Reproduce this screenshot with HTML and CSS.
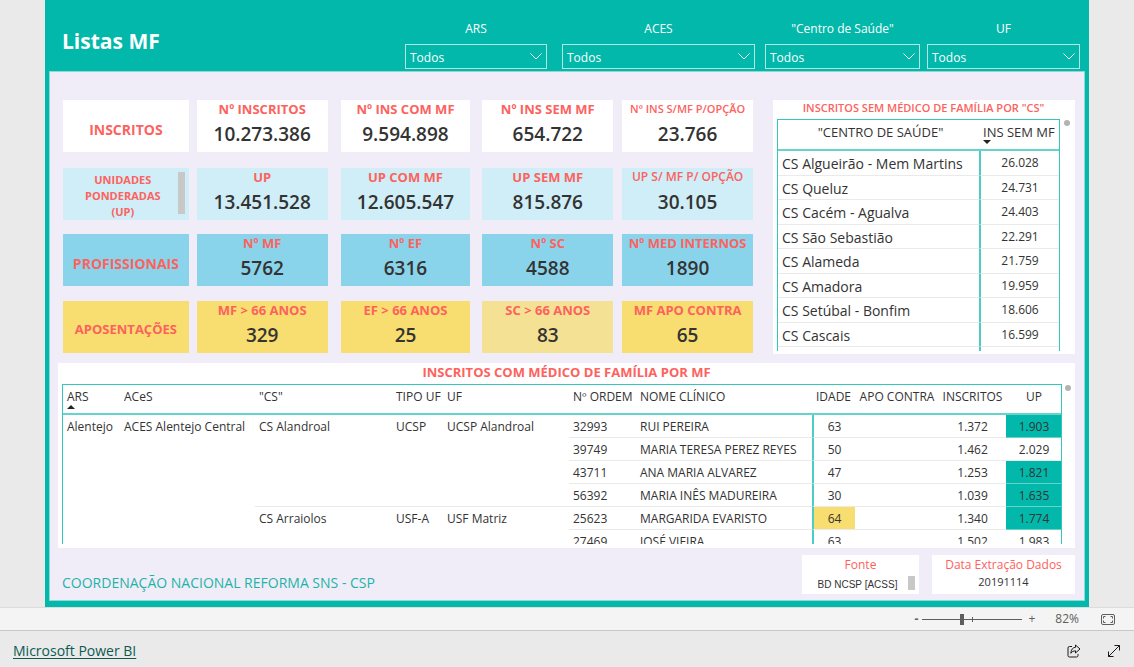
FILE: index.html
```html
<!DOCTYPE html>
<html lang="pt">
<head>
<meta charset="utf-8">
<title>Listas MF</title>
<link rel="stylesheet" href="styles.css">
</head>
<body>
<main class="report">
  <header class="report-header">
    <h1 class="report-title">Listas MF</h1>
    <form class="slicers">
      <div class="slicer">
        <label for="ars">ARS</label>
        <div class="select-box"><select id="ars"><option>Todos</option></select>
          <svg class="chevron" viewBox="0 0 12 7" aria-hidden="true"><path d="M0.5 0.5 6 6 11.5 0.5"/></svg></div>
      </div>
      <div class="slicer">
        <label for="aces">ACES</label>
        <div class="select-box"><select id="aces"><option>Todos</option></select>
          <svg class="chevron" viewBox="0 0 12 7" aria-hidden="true"><path d="M0.5 0.5 6 6 11.5 0.5"/></svg></div>
      </div>
      <div class="slicer">
        <label for="cs">"Centro de Saúde"</label>
        <div class="select-box"><select id="cs"><option>Todos</option></select>
          <svg class="chevron" viewBox="0 0 12 7" aria-hidden="true"><path d="M0.5 0.5 6 6 11.5 0.5"/></svg></div>
      </div>
      <div class="slicer">
        <label for="uf">UF</label>
        <div class="select-box"><select id="uf"><option>Todos</option></select>
          <svg class="chevron" viewBox="0 0 12 7" aria-hidden="true"><path d="M0.5 0.5 6 6 11.5 0.5"/></svg></div>
      </div>
    </form>
  </header>

  <div class="canvas">
    <div class="top-area">
      <section class="cards">
        <h2 class="card row-label">INSCRITOS</h2>
        <div class="card"><h3>Nº INSCRITOS</h3><p>10.273.386</p></div>
        <div class="card"><h3>Nº INS COM MF</h3><p>9.594.898</p></div>
        <div class="card"><h3>Nº INS SEM MF</h3><p>654.722</p></div>
        <div class="card small-title"><h3>Nº INS S/MF P/OPÇÃO</h3><p>23.766</p></div>

        <div class="card pale row-label long"><h2>UNIDADES PONDERADAS (UP)</h2><span class="thumb"></span></div>
        <div class="card pale"><h3>UP</h3><p>13.451.528</p></div>
        <div class="card pale"><h3>UP COM MF</h3><p>12.605.547</p></div>
        <div class="card pale"><h3>UP SEM MF</h3><p>815.876</p></div>
        <div class="card pale medium-title"><h3>UP S/ MF P/ OPÇÃO</h3><p>30.105</p></div>

        <h2 class="card blue row-label">PROFISSIONAIS</h2>
        <div class="card blue"><h3>Nº MF</h3><p>5762</p></div>
        <div class="card blue"><h3>Nº EF</h3><p>6316</p></div>
        <div class="card blue"><h3>Nº SC</h3><p>4588</p></div>
        <div class="card blue"><h3>Nº MED INTERNOS</h3><p>1890</p></div>

        <h2 class="card yellow row-label compact">APOSENTAÇÕES</h2>
        <div class="card yellow"><h3>MF &gt; 66 ANOS</h3><p>329</p></div>
        <div class="card yellow"><h3>EF &gt; 66 ANOS</h3><p>25</p></div>
        <div class="card yellow soft"><h3>SC &gt; 66 ANOS</h3><p>83</p></div>
        <div class="card yellow"><h3>MF APO CONTRA</h3><p>65</p></div>
      </section>

      <section class="panel centres">
        <h2>INSCRITOS SEM MÉDICO DE FAMÍLIA POR "CS"</h2>
        <div class="scroller">
          <div class="viewport">
            <table>
              <colgroup><col class="c-name"><col class="c-count"></colgroup>
              <thead><tr><th>"CENTRO DE SAÚDE"</th><th>INS SEM MF<svg class="sort" viewBox="0 0 8 4" aria-hidden="true"><path d="M0 0h8L4 4z"/></svg></th></tr></thead>
              <tbody>
                <tr><td>CS Algueirão - Mem Martins</td><td>26.028</td></tr>
                <tr><td>CS Queluz</td><td>24.731</td></tr>
                <tr><td>CS Cacém - Agualva</td><td>24.403</td></tr>
                <tr><td>CS São Sebastião</td><td>22.291</td></tr>
                <tr><td>CS Alameda</td><td>21.759</td></tr>
                <tr><td>CS Amadora</td><td>19.959</td></tr>
                <tr><td>CS Setúbal - Bonfim</td><td>18.606</td></tr>
                <tr><td>CS Cascais</td><td>16.599</td></tr>
                <tr><td></td><td></td></tr>
              </tbody>
            </table>
          </div>
          <span class="dot"></span>
        </div>
      </section>
    </div>

    <section class="panel doctors">
      <h2>INSCRITOS COM MÉDICO DE FAMÍLIA POR MF</h2>
      <div class="scroller">
        <div class="viewport">
          <table>
            <colgroup><col class="d-ars"><col class="d-aces"><col class="d-cs"><col class="d-type"><col class="d-uf"><col class="d-order"><col class="d-name"><col class="d-age"><col class="d-apo"><col class="d-ins"><col class="d-up"></colgroup>
            <thead><tr><th>ARS<svg class="sort" viewBox="0 0 8 4" aria-hidden="true"><path d="M0 4h8L4 0z"/></svg></th><th>ACeS</th><th>"CS"</th><th>TIPO UF</th><th>UF</th><th>Nº ORDEM</th><th>NOME CLÍNICO</th><th class="num">IDADE</th><th class="num">APO CONTRA</th><th class="num">INSCRITOS</th><th class="num">UP</th></tr></thead>
            <tbody>
              <tr><td rowspan="6">Alentejo</td><td rowspan="6">ACES Alentejo Central</td><td rowspan="4">CS Alandroal</td><td rowspan="4">UCSP</td><td rowspan="4">UCSP Alandroal</td><td>32993</td><td>RUI PEREIRA</td><td class="num age">63</td><td></td><td class="num">1.372</td><td class="num low">1.903</td></tr>
              <tr><td>39749</td><td>MARIA TERESA PEREZ REYES</td><td class="num age">50</td><td></td><td class="num">1.462</td><td class="num">2.029</td></tr>
              <tr><td>43711</td><td>ANA MARIA ALVAREZ</td><td class="num age">47</td><td></td><td class="num">1.253</td><td class="num low">1.821</td></tr>
              <tr><td>56392</td><td>MARIA INÊS MADUREIRA</td><td class="num age">30</td><td></td><td class="num">1.039</td><td class="num low">1.635</td></tr>
              <tr><td rowspan="2">CS Arraiolos</td><td rowspan="2">USF-A</td><td rowspan="2">USF Matriz</td><td>25623</td><td>MARGARIDA EVARISTO</td><td class="num age senior">64</td><td></td><td class="num">1.340</td><td class="num low">1.774</td></tr>
              <tr><td>27469</td><td>JOSÉ VIEIRA</td><td class="num age">63</td><td></td><td class="num">1.502</td><td class="num">1.983</td></tr>
            </tbody>
          </table>
        </div>
        <span class="dot"></span>
      </div>
    </section>

    <div class="credits">
      <p class="owner">COORDENAÇÃO NACIONAL REFORMA SNS - CSP</p>
      <div class="info source"><h3>Fonte</h3><p>BD NCSP [ACSS]</p><span class="thumb"></span></div>
      <div class="info date"><h3>Data Extração Dados</h3><p>20191114</p></div>
    </div>
  </div>
</main>

<div class="zoom-bar">
  <button type="button" class="minus" aria-label="Reduzir">-</button>
  <input type="range" min="0" max="100" value="39" aria-label="Zoom">
  <button type="button" aria-label="Ampliar">+</button>
  <output>82%</output>
  <button type="button" class="fit" aria-label="Ajustar à página">
    <svg width="14" height="11" viewBox="0 0 14 11"><rect x="0.5" y="0.5" width="13" height="10" rx="1.5"/><path d="M2.5 4.500V2.500H4.500M9.500 2.500H11.500V4.500M11.500 6.500V8.500H9.500M4.500 8.500H2.500V6.500"/></svg>
  </button>
</div>

<footer class="embed-bar">
  <a href="#">Microsoft Power BI</a>
  <div class="embed-actions">
    <button type="button" aria-label="Partilhar">
      <svg width="14" height="14" viewBox="0 0 14 14"><path d="M5 2.500H2.500Q1 2.500 1 4V11.500Q1 13 2.500 13H9.500Q11 13 11 11.500V10M8.500 1 13 5 8.500 9V6.800Q5.500 6.600 3.800 9.300Q4.200 3.700 8.500 3.300Z"/></svg>
    </button>
    <button type="button" aria-label="Ecrã inteiro">
      <svg width="14" height="14" viewBox="0 0 14 14"><path d="M1.500 12.500 12.500 1.500M7.500 1.500H12.500V6.500M1.500 7.500V12.500H6.500"/></svg>
    </button>
  </div>
</footer>
</body>
</html>
```
FILE: styles.css
```css
:root {
  --teal: #01b8aa;
  --coral: #fd625e;
  --ink: #333;
  --grey: #eaeaea;
}

* { box-sizing: border-box; }

body {
  margin: 0;
  background: var(--grey);
  color: var(--ink);
  font: 12px/16px "Open Sans", "Noto Sans", sans-serif;
}

h1, h2, h3, p, form { margin: 0; }
button { padding: 0; border: 0; background: none; font: inherit; color: inherit; }
svg { display: block; fill: none; stroke: currentColor; }

.report {
  margin: 0 45px;
  padding: 0 4px 6px;
  background: var(--teal);
}

/* Header and slicers */
.report-header {
  display: flex;
  justify-content: space-between;
  padding: 21px 5px 2px 13px;
  color: #fff;
}
.report-title { margin-top: 5px; font-size: 21px; line-height: 30px; font-weight: 700; }
.slicers {
  display: flex;
  flex: 0 1 675px;
}
.slicer { flex: 155 1 0; margin-left: 7px; }
.slicer:nth-child(1) { flex-grow: 142; margin-left: 0; }
.slicer:nth-child(2) { flex-grow: 193; margin-left: 15px; }
.slicer:nth-child(3) { margin-left: 10px; }
.slicer:nth-child(4) { flex-grow: 153; }
.slicer label { display: block; margin-bottom: 7px; text-align: center; }
.select-box { position: relative; }
.select-box select {
  display: block;
  width: 100%;
  height: 25px;
  padding: 2px 4px 0;
  appearance: none;
  border: 1px solid #b3e6e1;
  border-radius: 0;
  background: transparent;
  color: #fff;
  font: inherit;
}
.chevron {
  position: absolute;
  top: 9px;
  right: 5px;
  width: 12px;
  height: 7px;
  pointer-events: none;
}

/* Canvas */
.canvas {
  padding: 28px 9px 6px 8px;
  border: 1px solid #8fd8d3;
  background: #f0edf8;
}
.top-area {
  display: grid;
  grid-template-columns: 691fr 301fr;
  column-gap: 20px;
  padding-left: 5px;
}

.cards {
  display: grid;
  grid-template-columns: 126fr 8px 131fr 13px 130fr 12px 131fr 9px 131fr;
  grid-template-rows: 54px 52px 53px 52px;
  align-content: start;
  row-gap: 14px;
}
.card {
  height: 52px;
  background: #fff;
  text-align: center;
  white-space: nowrap;
}
.card:nth-child(5n+1) { grid-column: 1; }
.card:nth-child(5n+2) { grid-column: 3; }
.card:nth-child(5n+3) { grid-column: 5; }
.card:nth-child(5n+4) { grid-column: 7; }
.card:nth-child(5n+5) { grid-column: 9; }
.card h3 { color: var(--coral); font-size: 13px; line-height: 18px; font-weight: 700; }
.card p { margin-top: 3px; font-size: 19px; line-height: 26px; font-weight: 600; }
.card.small-title h3 { font-size: 11px; font-weight: 600; }
.card.medium-title h3 { font-size: 12px; font-weight: 600; }
.card.pale { background: #d0eef7; }
.card.blue { background: #8ad4eb; }
.card.yellow { background: #f8dd70; }
.card.soft { background: #f5e194; }
.card.row-label {
  display: flex;
  align-items: center;
  justify-content: center;
  padding-top: 8px;
  color: var(--coral);
  font-size: 14px;
  font-weight: 700;
}
.card.compact { padding-top: 4px; font-size: 13px; }
.card.long { align-items: flex-start; justify-content: flex-end; gap: 15px; padding: 4px 4px 0; }
.card.long h2 { width: 80px; font-size: 11px; line-height: 16px; white-space: normal; }
.thumb { display: block; background: #c8c8c8; }
.card.long .thumb { width: 7px; height: 42px; }

/* Table panels */
.panel { background: #fff; }
.panel h2 { color: var(--coral); text-align: center; }
.scroller { display: flex; gap: 3px; }
.viewport {
  flex: 1;
  overflow: hidden;
  border: 1px solid #33c6bb;
  border-bottom: 0;
}
.dot { width: 6px; height: 6px; margin-top: 1px; border-radius: 50%; background: #b3b3b3; }
.panel table { width: 100%; table-layout: fixed; border-collapse: separate; border-spacing: 0; }
.panel th {
  padding: 4px 0 0 4px;
  border-bottom: 2px solid #67d4cc;
  font-weight: 400;
  text-align: left;
  vertical-align: top;
  white-space: nowrap;
}
.panel td {
  padding: 2px 0 0 4px;
  border-bottom: 1px solid #eaeaea;
  white-space: nowrap;
}
.sort { width: 8px; height: 4px; fill: #222; stroke: none; }

.centres { height: 254px; padding: 0 5px 0 4px; }
.centres h2 { padding-top: 1px; font-size: 11px; line-height: 14px; margin-bottom: 4px; font-weight: 600; }
.centres .viewport { height: 232px; }
.centres .scroller { gap: 4px; }
.c-name { width: 201px; }
.c-count { width: 80px; }
.centres th { height: 31px; font-size: 13px; }
.centres th:first-child { text-align: center; }
.centres td { height: 24px; font-size: 14px; }
.centres tr:nth-child(odd) td { height: 25px; }
.centres td:last-child {
  padding: 0;
  border-left: 2px solid #4dccc3;
  font-size: 12px;
  text-align: center;
}

.doctors { height: 185px; margin-top: 9px; padding: 0 4px; }
.doctors h2 { font-size: 13px; line-height: 18px; margin-bottom: 3px; font-weight: 700; }
.doctors .viewport { height: 160px; }
.d-ars { width: 57px; }
.d-aces { width: 135px; }
.d-cs { width: 137px; }
.d-type { width: 51px; }
.d-uf { width: 126px; }
.d-order { width: 67px; }
.d-name { width: 176px; }
.d-age { width: 43px; }
.d-apo { width: 84px; }
.d-ins { width: 67px; }
.d-up { width: 56px; }
.doctors th { height: 30px; }
.doctors td { height: 23px; }
.doctors td[rowspan] { padding-top: 4px; vertical-align: top; }
.doctors .num { padding-left: 0; padding-right: 0; text-align: center; }
.doctors .age { border-left: 2px solid #4dccc3; }
.doctors .senior { background: #f8dd70; }
.doctors .low { background: var(--teal); border-bottom-color: #67d4cc; }

/* Credits */
.credits { display: flex; gap: 13px; margin-top: 7px; }
.owner {
  flex: 1;
  padding: 17px 0 0 4px;
  color: #1fb3a8;
  font-size: 14px;
  line-height: 22px;
}
.info { height: 39px; background: #fff; text-align: center; }
.info h3 { color: var(--coral); font-size: 12px; line-height: 19px; font-weight: 400; }
.info p { font-size: 11px; line-height: 16px; }
.source { position: relative; flex: 0 0 117px; }
.source p { padding: 2px 6px 0 0; font: 10px/18px "Liberation Sans", Arial, sans-serif; }
.source .thumb { position: absolute; right: 4px; bottom: 4px; width: 7px; height: 14px; }
.date { flex: 0 0 143px; }

/* Zoom bar */
.zoom-bar {
  display: flex;
  align-items: center;
  justify-content: flex-end;
  height: 24px;
  padding-right: 19px;
  border-top: 1px solid #dcdcdc;
  border-bottom: 1px solid #c8c8c8;
  background: #f4f4f4;
  color: #605e5c;
}
.zoom-bar .minus { font-weight: 700; }
.zoom-bar input {
  width: 100px;
  height: 11px;
  margin: 0 6px 0 4px;
  appearance: none;
  background:
    linear-gradient(#605e5c, #605e5c) 50px 50% / 1px 5px no-repeat,
    linear-gradient(#605e5c, #605e5c) 0 50% / 100% 1px no-repeat;
}
.zoom-bar input::-webkit-slider-thumb {
  appearance: none;
  width: 4px;
  height: 11px;
  background: #605e5c;
}
.zoom-bar output { margin: 0 22px 0 20px; }

/* Embed footer */
.embed-bar {
  display: flex;
  align-items: center;
  justify-content: space-between;
  height: 36px;
  padding: 4px 13px 0;
}
.embed-bar a { color: #0b5b53; font-size: 14px; line-height: 18px; text-underline-offset: 2px; }
.embed-actions { display: flex; gap: 26px; color: #1b1a19; }
```
